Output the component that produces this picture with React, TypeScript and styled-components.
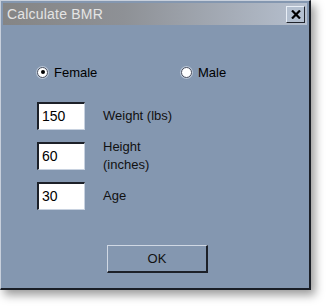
import React, { useState } from "react";
import styled, { createGlobalStyle } from "styled-components";

const GlobalStyle = createGlobalStyle`
  html, body {
    margin: 0;
    padding: 0;
    background: #ffffff;
  }
  body {
    font-family: "Liberation Sans", Arial, sans-serif;
  }
`;

const Page = styled.div`
  width: 328px;
  height: 306px;
  overflow: hidden;
`;

const Window = styled.div`
  box-sizing: border-box;
  width: 311px;
  height: 290px;
  background: #8497b0;
  border-top: 1px solid #c8d0dc;
  border-left: 1px solid #c8d0dc;
  border-right: 2px solid #1a1e26;
  border-bottom: 2px solid #1a1e26;
  box-shadow: 4px 5px 9px rgba(0, 0, 0, 0.4);
  padding: 2px;
  display: flex;
  flex-direction: column;
`;

const TitleBar = styled.div`
  height: 22px;
  display: flex;
  align-items: center;
  justify-content: space-between;
  padding: 0 2px 0 4px;
  background: linear-gradient(to right, #858585 0%, #8e9196 40%, #b6c0cf 100%);
`;

const Title = styled.span`
  color: #e4e4e4;
  font-size: 14px;
  letter-spacing: 0.2px;
`;

const CloseButton = styled.button`
  box-sizing: border-box;
  width: 19px;
  height: 17px;
  padding: 0;
  display: flex;
  align-items: center;
  justify-content: center;
  background: #b4c0d0;
  border-top: 1px solid #e8eef6;
  border-left: 1px solid #e8eef6;
  border-right: 1px solid #20242c;
  border-bottom: 1px solid #20242c;
`;

const Body = styled.div`
  flex: 1;
  display: flex;
  flex-direction: column;
  padding: 40px 0 0 34px;
  font-size: 13px;
  color: #000;
`;

const RadioRow = styled.div`
  display: flex;
  align-items: center;
  height: 14px;
`;

const RadioOption = styled.label<{ $width?: number }>`
  display: flex;
  flex: none;
  align-items: center;
  gap: 6px;
  width: ${(p) => (p.$width ? `${p.$width}px` : "auto")};
  cursor: pointer;
`;

const RadioDot = styled.span<{ $checked: boolean }>`
  box-sizing: border-box;
  width: 11px;
  height: 11px;
  border-radius: 50%;
  background: #ffffff;
  border: 1px solid #4a5060;
  box-shadow: 0 0 0 1px #b8c4d4;
  display: flex;
  align-items: center;
  justify-content: center;

  &::after {
    content: "";
    width: 4px;
    height: 4px;
    border-radius: 50%;
    background: #000;
    display: ${(p) => (p.$checked ? "block" : "none")};
  }
`;

const Fields = styled.div`
  display: flex;
  flex-direction: column;
  gap: 12px;
  margin-top: 23px;
`;

const FieldRow = styled.div`
  display: flex;
  align-items: center;
  gap: 18px;
  height: 28px;
`;

const TextBox = styled.input`
  box-sizing: border-box;
  width: 48px;
  height: 28px;
  padding: 2px 3px 4px;
  font-family: "Liberation Sans", Arial, sans-serif;
  font-size: 14px;
  color: #000;
  background: #ffffff;
  border-top: 2px solid #1c2028;
  border-left: 2px solid #1c2028;
  border-right: 1px solid #c8d2e0;
  border-bottom: 1px solid #c8d2e0;
  outline: none;
`;

const FieldLabel = styled.span`
  line-height: 18px;
  color: #111;
`;

const ButtonRow = styled.div`
  display: flex;
  margin-top: 35px;
  padding-left: 70px;
`;

const OkButton = styled.button`
  box-sizing: border-box;
  width: 101px;
  height: 28px;
  background: #8497b0;
  font-family: "Liberation Sans", Arial, sans-serif;
  font-size: 13px;
  color: #111;
  border-top: 1px solid #d0d8e4;
  border-left: 1px solid #d0d8e4;
  border-right: 2px solid #1c2028;
  border-bottom: 2px solid #1c2028;
`;

const fields = [
  { value: "150", label: ["Weight (lbs)"] },
  { value: "60", label: ["Height", "(inches)"] },
  { value: "30", label: ["Age"] },
];

const App: React.FC = () => {
  const [sex, setSex] = useState("female");

  return (
    <Page>
      <GlobalStyle />
      <Window>
        <TitleBar>
          <Title>Calculate BMR</Title>
          <CloseButton>
            <svg width="10" height="9" viewBox="0 0 10 9">
              <path d="M1 0.5 L9 8.5 M9 0.5 L1 8.5" stroke="#000" strokeWidth="2.2" />
            </svg>
          </CloseButton>
        </TitleBar>
        <Body>
          <RadioRow>
            <RadioOption $width={144} onClick={() => setSex("female")}>
              <RadioDot $checked={sex === "female"} />
              Female
            </RadioOption>
            <RadioOption onClick={() => setSex("male")}>
              <RadioDot $checked={sex === "male"} />
              Male
            </RadioOption>
          </RadioRow>
          <Fields>
            {fields.map((f) => (
              <FieldRow key={f.label[0]}>
                <TextBox defaultValue={f.value} />
                <FieldLabel>
                  {f.label.map((l) => (
                    <div key={l}>{l}</div>
                  ))}
                </FieldLabel>
              </FieldRow>
            ))}
          </Fields>
          <ButtonRow>
            <OkButton>OK</OkButton>
          </ButtonRow>
        </Body>
      </Window>
    </Page>
  );
};

export default App;
